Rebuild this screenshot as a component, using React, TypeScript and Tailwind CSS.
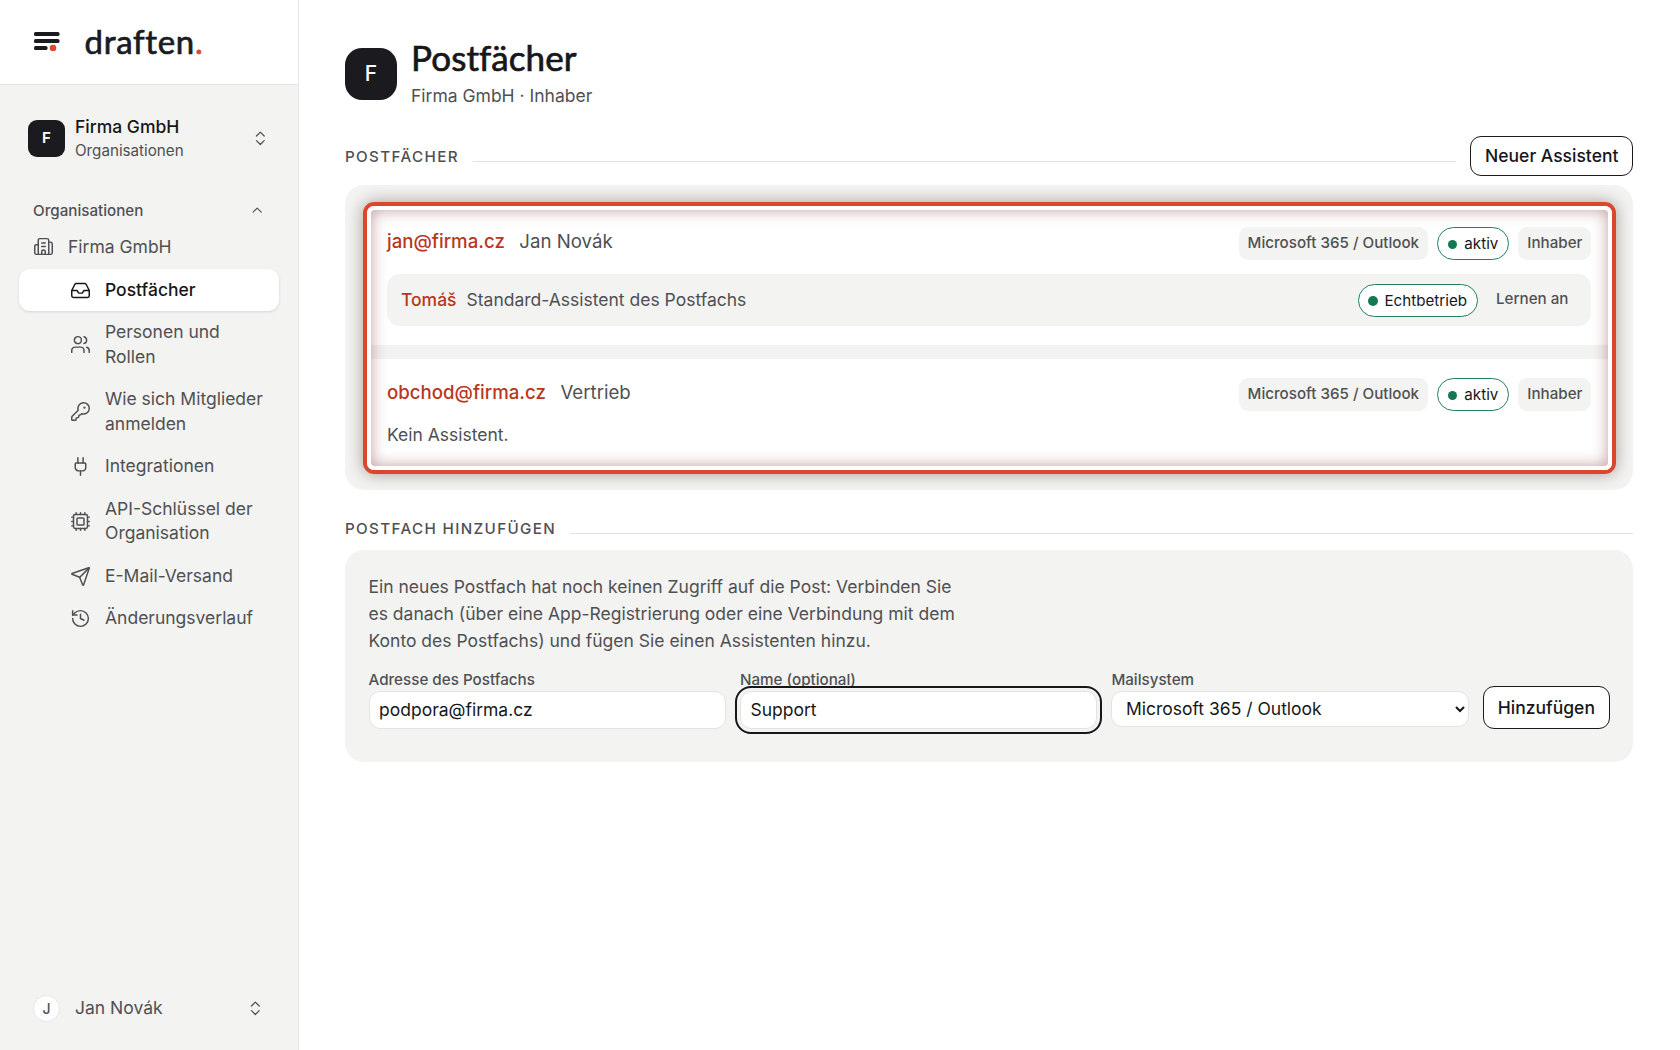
import type { ReactNode } from 'react';
import {
  Building2,
  ChevronsUpDown,
  ChevronUp,
  Cpu,
  History,
  Inbox,
  KeyRound,
  Plug,
  Send,
  Users,
} from 'lucide-react';

const navItems = [
  { label: 'Postfächer', icon: Inbox, active: true },
  { label: 'Personen und Rollen', icon: Users },
  { label: 'Wie sich Mitglieder anmelden', icon: KeyRound },
  { label: 'Integrationen', icon: Plug },
  { label: 'API-Schlüssel der Organisation', icon: Cpu },
  { label: 'E-Mail-Versand', icon: Send },
  { label: 'Änderungsverlauf', icon: History },
];

function Logo() {
  return (
    <div className="flex h-[85px] shrink-0 items-center border-b border-[#e4e4e3] bg-white pl-[34px]">
      <svg width="26" height="20" viewBox="0 0 26 20" className="mt-[-2px]">
        <rect x="0" y="1" width="25.5" height="4" rx="1.6" fill="#1a1a1f" />
        <rect x="0" y="8" width="25.5" height="4" rx="1.6" fill="#1a1a1f" />
        <rect x="0" y="15" width="13.5" height="4" rx="1.6" fill="#1a1a1f" />
        <circle cx="19" cy="17" r="3.3" fill="#dd4830" />
      </svg>
      <span className="mt-[-1px] ml-[24.5px] font-['Lato','Inter',sans-serif] text-[33px] leading-none tracking-[0.7px] text-[#1a1a1f] [-webkit-text-stroke:0.7px_currentColor]">
        draften<span className="text-[#dd4830]">.</span>
      </span>
    </div>
  );
}

function Sidebar() {
  return (
    <aside className="flex w-[299px] shrink-0 flex-col border-r border-[#e6e6e5] bg-[#f3f3f1] text-[#4f5053]">
      <Logo />
      <button className="mt-[30px] flex items-center pr-[28px] pl-[28px] text-left">
        <span className="flex size-[37px] items-center justify-center rounded-[9px] bg-[#1a1a1f] text-[15.2px] font-semibold text-white">
          F
        </span>
        <span className="ml-[10px] flex-1">
          <span className="block text-[17.5px] leading-[24.5px] font-medium text-[#17171a]">Firma GmbH</span>
          <span className="block text-[15.2px] leading-[22px]">Organisationen</span>
        </span>
        <ChevronsUpDown size={18.67} strokeWidth={1.6} />
      </button>

      <div className="mt-[38px] flex items-center justify-between pr-[33px] pl-[33px]">
        <span className="text-[15.2px] leading-[22px] font-medium">Organisationen</span>
        <ChevronUp size={16.33} strokeWidth={1.7} />
      </div>
      <div className="mt-[13px] flex items-center pl-[33px]">
        <Building2 size={21} strokeWidth={1.7} />
        <span className="ml-[14px] text-[17.5px] leading-[24.5px]">Firma GmbH</span>
      </div>

      <nav className="mt-[10.3px] flex flex-col gap-[1px] pr-[19.5px] pl-[19px]">
        {navItems.map(({ label, icon: Icon, active }) => (
          <a
            key={label}
            className={
              active
                ? 'flex items-center rounded-[11px] bg-white py-[8.5px] pr-[13px] pl-[51px] font-medium text-[#17171a] shadow-[0_1px_3px_rgba(0,0,0,0.12)]'
                : 'flex items-center py-[8.5px] pr-[13px] pl-[51px]'
            }
          >
            <Icon size={21} strokeWidth={1.7} className="shrink-0" />
            <span className="ml-[14px] text-[17.5px] leading-[24.5px]">{label}</span>
          </a>
        ))}
      </nav>

      <button className="mt-auto mb-[28px] flex items-center pr-[33px] pl-[33px] text-left">
        <span className="flex size-[27px] items-center justify-center rounded-full border border-[#e6e6e5] bg-white text-[14px] font-medium">
          J
        </span>
        <span className="ml-[15px] flex-1 text-[17.5px] leading-[24.5px]">Jan Novák</span>
        <ChevronsUpDown size={18.67} strokeWidth={1.6} />
      </button>
    </aside>
  );
}

function SectionHead({ title, children }: { title: string; children?: ReactNode }) {
  return (
    <div className="flex items-center">
      <h2 className="mt-[1px] text-[15.2px] leading-[22px] font-medium tracking-[1.35px] text-[#4f5053] uppercase">{title}</h2>
      <div className="mt-[10px] ml-[14px] h-px flex-1 bg-[#e2e2e2]" />
      {children}
    </div>
  );
}

function Tag({ children }: { children: ReactNode }) {
  return (
    <span className="flex h-[33px] items-center rounded-[9px] bg-[#f3f3f1] px-[9px] pb-px text-[15.17px] font-medium text-[#4f5053]">
      {children}
    </span>
  );
}

function Status({ children }: { children: ReactNode }) {
  return (
    <span className="flex h-[33.5px] items-center gap-[7px] rounded-full border border-[#22805d] bg-white px-[9.7px] pt-px text-[15.17px] text-[#17171a]">
      <span className="size-[9.3px] rounded-full bg-[#147850]" />
      {children}
    </span>
  );
}

function MailboxHead({ mail, name }: { mail: string; name: string }) {
  return (
    <div className="flex items-center">
      <span className="-mt-[3px] text-[18.67px] leading-[26px] font-medium text-[#b93720]">{mail}</span>
      <span className="-mt-[3px] ml-[14.5px] text-[18.67px] leading-[26px] text-[#4f5053]">{name}</span>
      <div className="ml-auto flex gap-[9.3px]">
        <Tag>Microsoft 365 / Outlook</Tag>
        <Status>aktiv</Status>
        <Tag>Inhaber</Tag>
      </div>
    </div>
  );
}

export default function App() {
  return (
    <div className="flex h-screen overflow-hidden bg-white font-['Inter',sans-serif] text-[17.5px] text-[#17171a]">
      <Sidebar />
      <main className="flex-1 pr-[46.6px] pl-[46px]">
        <header className="flex items-center pt-[36px]">
          <span className="mt-[3px] flex size-[52px] items-center justify-center rounded-[17px] bg-[#1a1a1f] text-[21px] font-medium text-white">
            F
          </span>
          <div className="ml-[14px]">
            <h1 className="font-['Lato','Inter',sans-serif] text-[35px] leading-[42px] tracking-[0.1px] [-webkit-text-stroke:0.7px_currentColor]">
              Postfächer
            </h1>
            <p className="mt-[4.5px] text-[17.5px] leading-[26px] text-[#4f5053]">Firma GmbH · Inhaber</p>
          </div>
        </header>

        <section className="mt-[27.5px]">
          <SectionHead title="Postfächer">
            <button className="ml-[14px] h-[40px] rounded-[11px] border border-[#1a1a1f] bg-white px-[14px] text-[17.5px] font-medium">
              Neuer Assistent
            </button>
          </SectionHead>

          <div className="relative mt-[9px] flex h-[305px] flex-col gap-[14px] rounded-[19px] bg-[#f3f3f1] p-[23.3px]">
            <div className="h-[137px] bg-white px-[18.7px] pt-[18.7px]">
              <MailboxHead mail="jan@firma.cz" name="Jan Novák" />
              <div className="mt-[14px] flex h-[52px] items-center rounded-[13px] bg-[#f3f3f1] px-[14px]">
                <span className="font-medium text-[#b93720]">Tomáš</span>
                <span className="ml-[10px] text-[#4f5053]">Standard-Assistent des Postfachs</span>
                <div className="ml-auto flex gap-[9.3px]">
                  <Status>Echtbetrieb</Status>
                  <Tag>Lernen an</Tag>
                </div>
              </div>
            </div>
            <div className="flex-1 bg-white px-[18.7px] pt-[18.7px]">
              <MailboxHead mail="obchod@firma.cz" name="Vertrieb" />
              <p className="mt-[11px] leading-[26px] text-[#4f5053]">Kein Assistent.</p>
            </div>

            {/* highlight ring */}
            <div className="absolute top-[17px] right-[17px] bottom-[16px] left-[18px] rounded-[11px] border-4 border-[#da472e] shadow-[0_0_16px_rgba(50,30,20,0.4)]">
              <div className="h-full rounded-[7px] border-4 border-white">
                <div className="h-full rounded-[4px] shadow-[inset_0_0_15px_rgba(110,20,20,0.42)]" />
              </div>
            </div>
          </div>
        </section>

        <section className="mt-[27px]">
          <SectionHead title="Postfach hinzufügen" />
          <div className="mt-[9.5px] h-[212px] rounded-[19px] bg-[#f3f3f1] px-[23.5px] pt-[23px]">
            <p className="w-[600px] leading-[27.4px] text-[#4f5053]">
              Ein neues Postfach hat noch keinen Zugriff auf die Post: Verbinden Sie es danach (über eine
              App-Registrierung oder eine Verbindung mit dem Konto des Postfachs) und fügen Sie einen Assistenten hinzu.
            </p>
            <form className="mt-[14.5px] flex gap-[14px]">
              <label className="flex-1 text-[15.2px] leading-[22px] font-medium text-[#4f5053]">
                Adresse des Postfachs
                <input
                  defaultValue="podpora@firma.cz"
                  className="block h-[38px] w-full rounded-[11px] border border-[#e4e4e3] bg-white px-[9.5px] pb-px text-[17.5px] font-normal text-[#17171a]"
                />
              </label>
              <label className="flex-1 text-[15.2px] leading-[22px] font-medium text-[#4f5053]">
                Name (optional)
                <input
                  defaultValue="Support"
                  className="block h-[38px] w-full rounded-[11px] border border-[#e4e4e3] bg-white px-[9.5px] pb-px text-[17.5px] font-normal text-[#17171a] outline-2 outline-offset-[3px] outline-[#17171a]"
                />
              </label>
              <label className="flex-1 text-[15.2px] leading-[22px] font-medium text-[#4f5053]">
                Mailsystem
                <select className="block h-[36px] w-full rounded-[11px] border border-[#e4e4e3] bg-white px-[9.5px] pb-px text-[17.5px] font-normal text-[#17171a]">
                  <option>Microsoft 365 / Outlook</option>
                </select>
              </label>
              <button className="mt-[17px] h-[43px] rounded-[11px] border border-[#1a1a1f] bg-white px-[14px] font-medium">
                Hinzufügen
              </button>
            </form>
          </div>
        </section>
      </main>
    </div>
  );
}
